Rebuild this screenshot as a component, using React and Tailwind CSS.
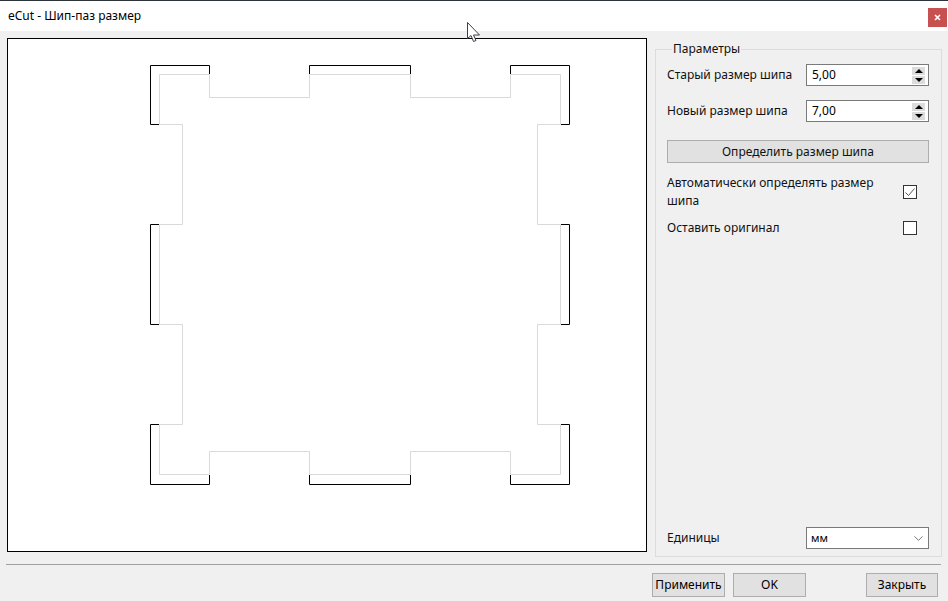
import React from 'react';
import { ChevronDown } from 'lucide-react';

// контур заготовки: серый - новый размер шипа, черный - старый
const GREY_PATH = 'M159.5 124.5V74.5H209.5V97.5H309.5V74.5H410.5V97.5H510.5V74.5H560.5V124.5H537.5V224.5H560.5V324.5H537.5V424.5H560.5V474.5H510.5V451.5H410.5V474.5H309.5V451.5H209.5V474.5H159.5V424.5H182.5V324.5H159.5V224.5H182.5V124.5Z';
const BLACK_PATHS = [
    'M209.5 74V65.5H150.5V124.5H159',
    'M309.5 74V65.5H410.5V74',
    'M510.5 74V65.5H569.5V124.5H561',
    'M159 224.5H150.5V324.5H159',
    'M561 224.5H569.5V324.5H561',
    'M159 424.5H150.5V484.5H209.5V475',
    'M309.5 475V484.5H410.5V475',
    'M510.5 475V484.5H569.5V424.5H561',
];

const FONT = 'font-["Noto_Sans","Open_Sans",sans-serif]';

const SpinBox = ({ value }) => (
    <div className="w-[123px] h-[22px] bg-white border border-[#7a7a7a] flex items-center justify-between pl-[5px] pr-[3px]">
        <span className="text-[12px] text-black">{value}</span>
        <div className="flex flex-col gap-px">
            <div className="w-[13px] h-[8px] bg-[#dcdcdc] flex items-center justify-center">
                <div className="w-0 h-0 border-x-[4px] border-x-transparent border-b-[4px] border-b-black" />
            </div>
            <div className="w-[13px] h-[8px] bg-[#dcdcdc] flex items-center justify-center">
                <div className="w-0 h-0 border-x-[4px] border-x-transparent border-t-[4px] border-t-black" />
            </div>
        </div>
    </div>
);

const Field = ({ label, value, className }) => (
    <div className={`flex items-center justify-between ${className}`}>
        <span>{label}</span>
        <SpinBox value={value} />
    </div>
);

const CheckRow = ({ label, checked, className }) => (
    <div className={`flex items-center justify-between pr-[12px] h-[14px] ${className}`}>
        <span>{label}</span>
        <div className="w-[14px] h-[14px] bg-white border border-[#333] flex items-center justify-center">
            {checked && (
                <svg width="12" height="12" viewBox="0 0 12 12" fill="none">
                    <path d="M1.5 6.5L4.5 9.5L10.5 2.5" stroke="#555" strokeWidth="1" />
                </svg>
            )}
        </div>
    </div>
);

const DialogButton = ({ children, className }) => (
    <button type="button" className={`h-[24px] bg-[#e1e1e1] border border-[#adadad] text-[12px] text-black ${className}`}>
        {children}
    </button>
);

const App = () => (
    <div className={`relative w-[948px] h-[601px] overflow-hidden flex flex-col bg-[#f0f0f0] text-[12px] text-[#111] ${FONT}`}>
        {/* Заголовок окна */}
        <div className="h-[31px] shrink-0 bg-white border-t border-[#2b3238] flex items-start justify-between pl-[8px] pr-[1px]">
            <span className="text-[12px] leading-[30px] text-black">eCut - Шип-паз размер</span>
            <div className="mt-[7px] w-[19px] h-[19px] bg-[#c75050] flex items-center justify-center text-white">
                <svg width="7" height="7" viewBox="0 0 7 7" fill="none">
                    <path d="M1 1L6 6M6 1L1 6" stroke="currentColor" strokeWidth="1.6" />
                </svg>
            </div>
        </div>

        <div className="h-[533px] shrink-0 flex items-start pl-[7px] pt-[7px] gap-[8px]">
            {/* Область просмотра */}
            <div className="w-[640px] h-[514px] shrink-0 bg-white border border-black">
                <svg width="638" height="512" viewBox="8 39 638 512" fill="none">
                    <path d={GREY_PATH} stroke="#d9d9d9" />
                    {BLACK_PATHS.map((d) => (
                        <path key={d} d={d} stroke="#000" />
                    ))}
                </svg>
            </div>

            {/* Параметры */}
            <fieldset className="mt-[4px] w-[287px] h-[515px] shrink-0 border border-[#dcdcdc] flex flex-col pl-[11px] pr-[12px] relative">
                <legend className="ml-[5px] px-px text-[12px] leading-[14px]">Параметры</legend>
                <Field label="Старый размер шипа" value="5,00" className="mt-[8px]" />
                <Field label="Новый размер шипа" value="7,00" className="mt-[14px]" />
                <button type="button" className="mt-[18px] w-full h-[23px] bg-[#e1e1e1] border border-[#adadad] text-[12px] text-[#111]">
                    Определить размер шипа
                </button>
                <CheckRow label="Автоматически определять размер шипа" checked className="mt-[22px]" />
                <CheckRow label="Оставить оригинал" className="mt-[22px]" />
                <div className="mt-auto mb-[7px] flex items-center justify-between">
                    <span>Единицы</span>
                    <div className="w-[123px] h-[22px] bg-white border border-[#7a7a7a] flex items-center justify-between pl-[4px] pr-[2px]">
                        <span className="text-[11px] text-black">мм</span>
                        <ChevronDown className="w-[15px] h-[15px] text-[#555]" strokeWidth={1.25} />
                    </div>
                </div>
            </fieldset>
        </div>

        {/* Нижняя панель */}
        <div className="ml-[6px] w-[935px] border-t border-[#a0a0a0]" />
        <div className="pt-[8px] pl-[652px] flex">
            <DialogButton className="w-[73px]">Применить</DialogButton>
            <DialogButton className="w-[73px] ml-[8px]">OK</DialogButton>
            <DialogButton className="w-[72px] ml-[60px]">Закрыть</DialogButton>
        </div>

        {/* Курсор мыши */}
        <svg className="absolute left-[467px] top-[22px]" width="14" height="21" viewBox="0 0 14 21" fill="none">
            <path d="M0.5 0.5V16.5L4 13.5L6.5 19.5L9 18.5L6.5 13H12.5Z" fill="#fff" stroke="#3c4048" />
        </svg>
    </div>
);

export default App;
